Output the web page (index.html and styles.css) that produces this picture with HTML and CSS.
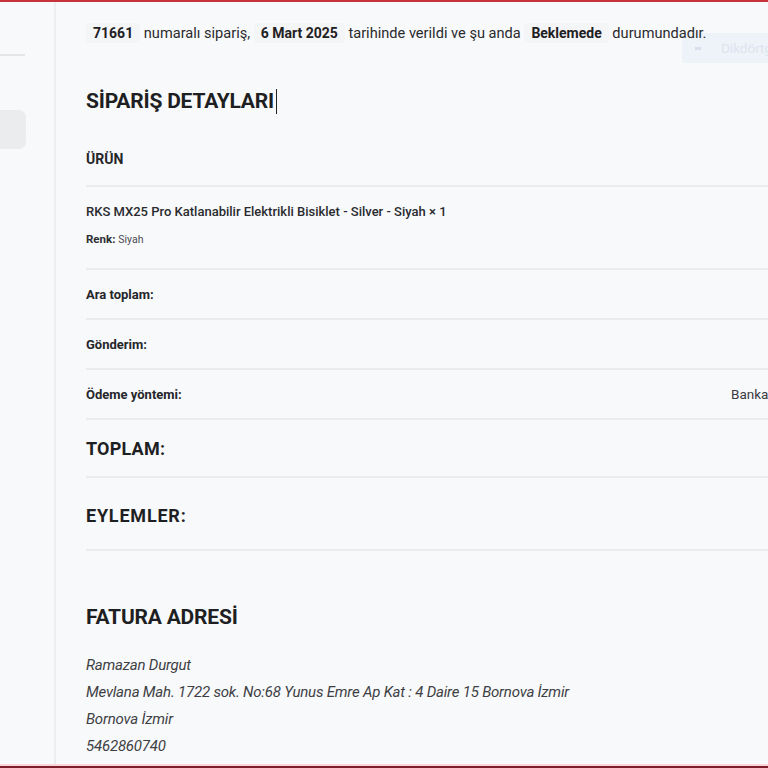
FILE: index.html
```html
<!DOCTYPE html>
<html lang="tr">
<head>
<meta charset="utf-8">
<title>Sipariş</title>
<link rel="stylesheet" href="styles.css">
</head>
<body>
<div class="frame">
  <aside class="sidebar">
    <div class="side-rule"></div>
    <div class="side-pill"></div>
  </aside>
  <main class="main">
    <p class="status"><mark class="hl">71661</mark> numaralı sipariş, <mark class="hl">6 Mart 2025</mark> tarihinde verildi ve şu anda <mark class="hl">Beklemede</mark> durumundadır.</p>
    <div class="ghost-btn"><span class="ghost-icon"></span><span>Dikdörtgen</span></div>

    <h2 class="title">SİPARİŞ DETAYLARI<span class="caret"></span></h2>

    <div class="table">
      <div class="row row-head"><span class="lbl">ÜRÜN</span></div>
      <div class="row row-product">
        <div class="product-name">RKS MX25 Pro Katlanabilir Elektrikli Bisiklet - Silver - Siyah × 1</div>
        <div class="product-meta"><b>Renk:</b> <span>Siyah</span></div>
      </div>
      <div class="row row-line"><span class="lbl">Ara toplam:</span><span class="val"></span></div>
      <div class="row row-line"><span class="lbl">Gönderim:</span><span class="val"></span></div>
      <div class="row row-line"><span class="lbl">Ödeme yöntemi:</span><span class="val">Banka havalesi</span></div>
      <div class="row row-total"><span class="big">TOPLAM:</span></div>
      <div class="row row-actions"><span class="big big-wide">EYLEMLER:</span></div>
    </div>

    <h2 class="title title-addr">FATURA ADRESİ</h2>
    <address class="addr">
      <span>Ramazan Durgut</span>
      <span>Mevlana Mah. 1722 sok. No:68 Yunus Emre Ap Kat : 4 Daire 15 Bornova İzmir</span>
      <span>Bornova İzmir</span>
      <span>5462860740</span>
    </address>
  </main>
</div>
<div class="bottom-bar"></div>
</body>
</html>
```
FILE: styles.css
```css
* { box-sizing: border-box; }
html, body {
  margin: 0;
  padding: 0;
  width: 768px;
  height: 768px;
  overflow: hidden;
  background: #f8f9fb;
}
body {
  font-family: Roboto, "Noto Sans", sans-serif;
  color: #222326;
  border-top: 2px solid #c8323a;
  display: flex;
  flex-direction: column;
}
.frame {
  flex: 1;
  display: flex;
  min-height: 0;
}
.sidebar {
  width: 56px;
  flex: none;
  border-right: 2px solid #eceef1;
  padding-top: 52px;
}
.side-rule {
  width: 25px;
  height: 2px;
  background: #e4e6e9;
}
.side-pill {
  margin-top: 54px;
  width: 26px;
  height: 39px;
  background: #ebecee;
  border-radius: 0 7px 7px 0;
}
.main {
  flex: none;
  width: 900px;
  padding-left: 30px;
  position: relative;
}
.status {
  position: relative;
  z-index: 1;
  margin: 0;
  padding-top: 21px;
  font-size: 14.6px;
  line-height: 20px;
  letter-spacing: 0;
  color: #2a2b2e;
}
.hl {
  background: #f4f5f7;
  color: #1f2023;
  font-weight: 700;
  font-size: 14px;
  padding: 2px 7px;
  border-radius: 3px;
}
.ghost-btn {
  position: absolute;
  left: 626px;
  top: 31px;
  width: 130px;
  height: 30px;
  background: #eef3f9;
  border-radius: 3px;
  display: flex;
  align-items: center;
  gap: 20px;
  padding-left: 13px;
  color: #dce4ef;
  font-size: 13.5px;
}
.ghost-icon {
  width: 6px;
  height: 3px;
  background: #d6dfeb;
}
.title {
  margin: 0;
  margin-top: 44px;
  font-size: 21px;
  line-height: 28px;
  font-weight: 700;
  letter-spacing: -0.2px;
  color: #1e1f22;
  display: flex;
  align-items: center;
}
.caret {
  width: 1px;
  height: 25px;
  background: #222;
  margin-left: 2px;
}
.table {
  margin-top: 34px;
  width: 760px;
}
.row {
  border-bottom: 2px solid #eaecef;
  display: grid;
  grid-template-columns: 645px 1fr;
  align-items: center;
}
.lbl {
  font-weight: 700;
  font-size: 13px;
  letter-spacing: 0;
  color: #25262a;
}
.val {
  font-size: 13.5px;
  color: #3a3b3f;
  white-space: nowrap;
}
.row-head { padding: 0 0 16px; }
.row-head .lbl { font-size: 14px; line-height: 20px; }
.row-product {
  display: block;
  height: 83px;
  padding-top: 16px;
}
.product-name {
  font-size: 13px;
  font-weight: 500;
  letter-spacing: 0;
  color: #2a2b2f;
  line-height: 18px;
}
.product-meta {
  margin-top: 11px;
  font-size: 11.5px;
  line-height: 14px;
  color: #4a4b4f;
}
.product-meta b { font-weight: 700; color: #2d2e32; }
.product-meta span { font-size: 10.5px; }
.row-line { height: 50px; }
.big {
  font-size: 18px;
  font-weight: 700;
  letter-spacing: 0.2px;
  color: #1e1f22;
}
.big-wide { letter-spacing: 0.8px; }
.row-total { height: 58px; }
.row-actions { height: 73px; padding-bottom: 0; padding-top: 4px; }
.title-addr { margin-top: 52px; }
.addr {
  margin-top: 21px;
  font-style: italic;
  font-size: 15px;
  line-height: 27px;
  letter-spacing: -0.2px;
  color: #3e3f44;
  display: flex;
  flex-direction: column;
}
.bottom-bar {
  height: 4px;
  flex: none;
  background: #7d1f2a;
  border-top: 2px solid #f9d5db;
}
```
